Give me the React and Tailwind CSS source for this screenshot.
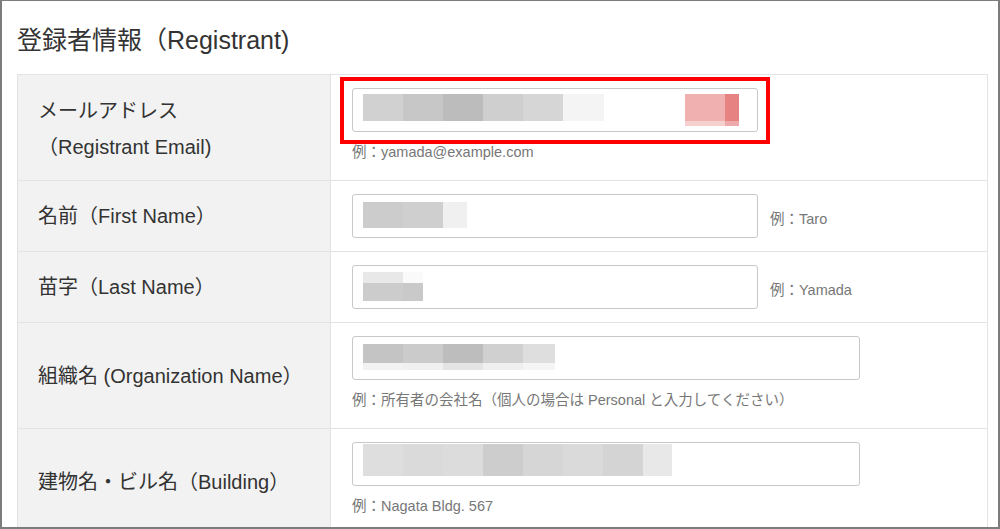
import React from "react";

const FONT = { fontFamily: '"Liberation Sans", "Noto Sans CJK JP", sans-serif' };

function Blocks({ rows, top }) {
  return (
    <div className="flex flex-col" style={{ marginTop: top }}>
      {rows.map((r, i) => (
        <div key={i} className="flex">
          {r.cells.map((c, j) => (
            <div key={j} style={{ width: c[0], height: r.h, background: c[1] }} />
          ))}
        </div>
      ))}
    </div>
  );
}

function FakeInput({ wide, children }) {
  return (
    <div
      className={`h-[44px] ${wide ? "w-[508px]" : "w-[406px]"} shrink-0 rounded-[3px] border border-[#c8c8c8] bg-white pl-[10px] flex items-start`}
    >
      {children}
    </div>
  );
}

function Hint({ children }) {
  return <div className="text-[14.5px] leading-[20px] text-[#777]">{children}</div>;
}

function Row({ label, children, last, short }) {
  return (
    <div className={`flex ${last ? "" : "border-b border-[#e3e3e3]"}`}>
      <div className="w-[313px] shrink-0 bg-[#f2f2f2] border-r border-[#e3e3e3] flex items-center pl-[20px] text-[20px] leading-[36px] text-[#333]">
        {label}
      </div>
      <div className={`relative flex-1 pl-[21px] pt-[13px] ${short ? "pb-[13px]" : "pb-[18px]"}`}>
        {children}
      </div>
    </div>
  );
}

export default function App() {
  return (
    <div
      className="w-[1000px] h-[529px] overflow-hidden bg-white border-t border-x-2 border-b-2 border-[#7c7c7c]"
      style={FONT}
    >
      <div className="pl-[15px] pr-[10px]">
        <h1 className="pt-[23px] h-[73px] text-[25px] leading-[32px] text-[#333]">
          登録者情報（Registrant)
        </h1>
        <div className="border border-[#e3e3e3]">
          <Row
            label={
              <div className="pt-[2px]">
                <div>メールアドレス</div>
                <div>（Registrant Email)</div>
              </div>
            }
          >
            <div className="absolute left-[9px] top-[2px] w-[430px] h-[67px] border-[4px] border-[#ff0000]" />
            <FakeInput>
              <div className="flex items-start mt-[5px]">
                <Blocks
                  top={0}
                  rows={[
                    {
                      h: 27,
                      cells: [
                        [40, "#d1d1d1"],
                        [40, "#c7c7c7"],
                        [40, "#bcbcbc"],
                        [40, "#cfcfcf"],
                        [40, "#d6d6d6"],
                        [41, "#f4f4f4"],
                      ],
                    },
                  ]}
                />
                <div className="ml-[81px]">
                  <Blocks
                    top={0}
                    rows={[
                      { h: 27, cells: [[40, "#f0b0b0"], [14, "#e68282"]] },
                      { h: 5, cells: [[40, "#f6cfcf"], [14, "#eeaaaa"]] },
                    ]}
                  />
                </div>
              </div>
            </FakeInput>
            <div className="mt-[10px]">
              <Hint>例：yamada@example.com</Hint>
            </div>
          </Row>
          <Row label="名前（First Name）" short>
            <div className="flex items-center gap-[12px]">
              <FakeInput>
                <Blocks
                  top={7}
                  rows={[{ h: 26, cells: [[40, "#cccccc"], [40, "#cfcfcf"], [24, "#f0f0f0"]] }]}
                />
              </FakeInput>
              <div className="pt-[5px]">
                <Hint>例：Taro</Hint>
              </div>
            </div>
          </Row>
          <Row label="苗字（Last Name）" short>
            <div className="flex items-center gap-[12px]">
              <FakeInput>
                <Blocks
                  top={6}
                  rows={[
                    { h: 11, cells: [[40, "#e8e8e8"], [20, "#fafafa"]] },
                    { h: 18, cells: [[40, "#cccccc"], [20, "#c9c9c9"]] },
                  ]}
                />
              </FakeInput>
              <div className="pt-[5px]">
                <Hint>例：Yamada</Hint>
              </div>
            </div>
          </Row>
          <Row label="組織名 (Organization Name）">
            <FakeInput wide>
              <Blocks
                top={7}
                rows={[
                  {
                    h: 19,
                    cells: [
                      [40, "#c4c4c4"],
                      [40, "#cbcbcb"],
                      [40, "#bdbdbd"],
                      [40, "#d0d0d0"],
                      [32, "#dedede"],
                    ],
                  },
                  {
                    h: 7,
                    cells: [
                      [40, "#f2f2f2"],
                      [40, "#f0f0f0"],
                      [40, "#e4e4e4"],
                      [40, "#efefef"],
                      [32, "#f5f5f5"],
                    ],
                  },
                ]}
              />
            </FakeInput>
            <div className="mt-[10px]">
              <Hint>例：所有者の会社名（個人の場合は Personal と入力してください）</Hint>
            </div>
          </Row>
          <Row label="建物名・ビル名（Building）" last>
            <FakeInput wide>
              <Blocks
                top={1}
                rows={[
                  {
                    h: 32,
                    cells: [
                      [40, "#dedede"],
                      [40, "#dadada"],
                      [40, "#dcdcdc"],
                      [40, "#cdcdcd"],
                      [40, "#d6d6d6"],
                      [40, "#dadada"],
                      [40, "#d4d4d4"],
                      [29, "#e8e8e8"],
                    ],
                  },
                ]}
              />
            </FakeInput>
            <div className="mt-[10px]">
              <Hint>例：Nagata Bldg. 567</Hint>
            </div>
          </Row>
        </div>
      </div>
    </div>
  );
}
